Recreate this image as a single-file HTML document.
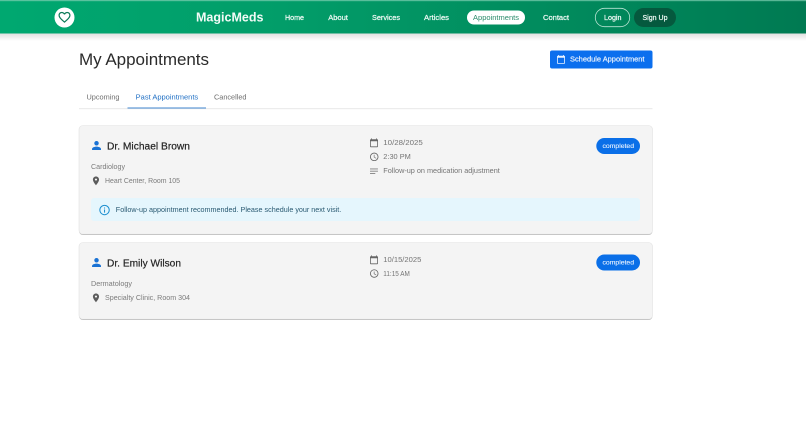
<!DOCTYPE html>
<html lang="en">
<head>
<meta charset="utf-8">
<title>My Appointments</title>
<style>
html,body{margin:0;padding:0;background:#fff;width:806px;height:423px;overflow:hidden}
svg{display:block;position:absolute;left:0;top:0;filter:blur(.35px)}
text{font-family:"Liberation Sans",sans-serif}
.nav{font-size:7.5px;fill:#f2fbf7;stroke:#f2fbf7;stroke-width:.22px}
.sub{font-size:7.2px;fill:#7b7b7b}
.dark{font-size:7.2px;fill:#747474}
.name{font-size:10px;fill:#222;stroke:#222;stroke-width:.18px}
.tab{font-size:7.2px;fill:#6e6e6e}
.badge{font-size:6.8px;fill:#e8f2ff;stroke:#e8f2ff;stroke-width:.12px}
</style>
</head>
<body>
<svg width="806" height="423" viewBox="0 0 806 423" xmlns="http://www.w3.org/2000/svg">
<defs>
<linearGradient id="hd" x1="0" y1="0" x2="1" y2="0">
<stop offset="0" stop-color="#00a870"/>
<stop offset=".35" stop-color="#029d69"/>
<stop offset="1" stop-color="#007a52"/>
</linearGradient>
<linearGradient id="sh" x1="0" y1="0" x2="0" y2="1">
<stop offset="0" stop-color="#000" stop-opacity=".13"/>
<stop offset="1" stop-color="#000" stop-opacity="0"/>
</linearGradient>
<path id="cal" d="M20 3h-1V1h-2v2H7V1H5v2H4c-1.1 0-2 .9-2 2v16c0 1.1.9 2 2 2h16c1.1 0 2-.9 2-2V5c0-1.1-.9-2-2-2zm0 18H4V8h16v13z"/>
<path id="clock" d="M11.99 2C6.47 2 2 6.48 2 12s4.47 10 9.99 10C17.52 22 22 17.52 22 12S17.52 2 11.99 2zM12 20c-4.42 0-8-3.58-8-8s3.58-8 8-8 8 3.58 8 8-3.58 8-8 8zM12.5 7H11v6l5.25 3.15.75-1.23-4.5-2.67z"/>
<path id="pin" d="M12 2C8.13 2 5 5.13 5 9c0 5.25 7 13 7 13s7-7.75 7-13c0-3.87-3.13-7-7-7zm0 9.5c-1.38 0-2.5-1.12-2.5-2.5s1.12-2.5 2.5-2.5 2.5 1.12 2.5 2.5-1.12 2.5-2.5 2.5z"/>
<path id="person" d="M12 12c2.21 0 4-1.79 4-4s-1.79-4-4-4-4 1.79-4 4 1.79 4 4 4zm0 2c-2.67 0-8 1.34-8 4v2h16v-2c0-2.66-5.33-4-8-4z"/>
</defs>

<rect x="0" y="33" width="806" height="8" fill="url(#sh)"/>
<rect x="0" y="0" width="806" height="33.5" fill="url(#hd)"/>
<rect x="0" y="0" width="806" height="1.2" fill="#7fcfb2" opacity=".7"/>

<circle cx="64.5" cy="17.5" r="10" fill="#fff"/>
<g transform="translate(57.3 10.1) scale(.6)" fill="#0a7a57">
<path d="M16.5 3c-1.74 0-3.41.81-4.5 2.09C10.91 3.81 9.24 3 7.5 3 4.42 3 2 5.42 2 8.5c0 3.78 3.4 6.86 8.55 11.54L12 21.35l1.45-1.32C18.6 15.36 22 12.28 22 8.5 22 5.42 19.58 3 16.5 3zm-4.4 15.55l-.1.1-.1-.1C7.14 14.24 4 11.39 4 8.5 4 6.5 5.5 5 7.5 5c1.54 0 3.04.99 3.57 2.36h1.87C13.46 5.99 14.96 5 16.5 5c2 0 3.5 1.5 3.5 3.5 0 2.89-3.14 5.74-7.9 10.05z"/>
</g>

<text x="196" y="21.5" font-size="12.6" font-weight="700" fill="#f2fbf7" textLength="67.5" lengthAdjust="spacingAndGlyphs">MagicMeds</text>
<text class="nav" x="285" y="20" textLength="19" lengthAdjust="spacingAndGlyphs">Home</text>
<text class="nav" x="328.3" y="20" textLength="19.6" lengthAdjust="spacingAndGlyphs">About</text>
<text class="nav" x="372" y="20" textLength="28" lengthAdjust="spacingAndGlyphs">Services</text>
<text class="nav" x="424" y="20" textLength="25" lengthAdjust="spacingAndGlyphs">Articles</text>
<rect x="467" y="10.5" width="58" height="14" rx="7" fill="#fff"/>
<text x="473" y="20" font-size="7.5" fill="#2a8b6b" textLength="46" lengthAdjust="spacingAndGlyphs">Appointments</text>
<text class="nav" x="543" y="20" textLength="26" lengthAdjust="spacingAndGlyphs">Contact</text>
<rect x="595.3" y="8.3" width="34.4" height="18.4" rx="9.2" fill="none" stroke="#b9e3d3" stroke-width=".8"/>
<text class="nav" x="604" y="20" textLength="17.5" lengthAdjust="spacingAndGlyphs">Login</text>
<rect x="634" y="8" width="42" height="19" rx="9.5" fill="#05593e"/>
<text class="nav" x="642.5" y="20" textLength="25" lengthAdjust="spacingAndGlyphs">Sign Up</text>

<text x="79" y="65" font-size="17" fill="#2b2b2b" textLength="130" lengthAdjust="spacing">My Appointments</text>

<rect x="550" y="50.5" width="102.5" height="18" rx="2" fill="#0b6fee"/>
<use href="#cal" transform="translate(556.2 54.6) scale(.4)" fill="#e8f2ff"/>
<text x="570" y="61.3" font-size="7.3" fill="#e8f2ff" stroke="#e8f2ff" stroke-width=".2" textLength="74.5" lengthAdjust="spacingAndGlyphs">Schedule Appointment</text>

<rect x="79" y="108" width="573.5" height="1.2" fill="#ececec"/>
<text class="tab" x="86.5" y="99.5" textLength="33" lengthAdjust="spacingAndGlyphs">Upcoming</text>
<text x="135.7" y="99.5" font-size="7.2" fill="#1f6fc4" textLength="62.5" lengthAdjust="spacingAndGlyphs">Past Appointments</text>
<text class="tab" x="214" y="99.5" textLength="32.5" lengthAdjust="spacingAndGlyphs">Cancelled</text>
<rect x="127.5" y="107.5" width="78.5" height="1" fill="#3f86cf"/>

<!-- Card 1 -->
<rect x="79" y="127" width="573.5" height="108" rx="4" fill="#000" opacity=".33"/>
<rect x="79" y="125.5" width="573.5" height="108.7" rx="4" fill="#f4f4f4" stroke="#e2e2e2" stroke-width=".6"/>
<use href="#person" transform="translate(89.8 138.8) scale(.56)" fill="#1a72d4"/>
<text class="name" x="107" y="149.7" textLength="83" lengthAdjust="spacingAndGlyphs">Dr. Michael Brown</text>
<text class="sub" x="91" y="169" textLength="34" lengthAdjust="spacingAndGlyphs">Cardiology</text>
<use href="#pin" transform="translate(90.7 175.6) scale(.44)" fill="#5c5c5c"/>
<text class="sub" x="105" y="183" textLength="75" lengthAdjust="spacingAndGlyphs">Heart Center, Room 105</text>
<use href="#cal" transform="translate(369.2 138) scale(.4)" fill="#666"/>
<text class="dark" x="383.3" y="145" textLength="39.5" lengthAdjust="spacingAndGlyphs">10/28/2025</text>
<use href="#clock" transform="translate(369.2 151.8) scale(.42)" fill="#666"/>
<text class="dark" x="383.3" y="159" textLength="27.5" lengthAdjust="spacingAndGlyphs">2:30 PM</text>
<path d="M3 18h12v-2H3v2zM3 6v2h18V6H3zm0 7h18v-2H3v2z" transform="translate(368.7 165.9) scale(.44)" fill="#808080"/>
<text class="dark" x="383.3" y="173" textLength="116.5" lengthAdjust="spacingAndGlyphs">Follow-up on medication adjustment</text>
<rect x="596.3" y="138" width="43.7" height="16" rx="8" fill="#0a6fe8"/>
<text class="badge" x="602.5" y="148.2" textLength="31.5" lengthAdjust="spacingAndGlyphs">completed</text>
<rect x="91" y="198" width="549" height="23" rx="3" fill="#e5f6fd"/>
<path d="M11 7h2v2h-2zm0 4h2v6h-2zm1-9C6.48 2 2 6.48 2 12s4.48 10 10 10 10-4.48 10-10S17.52 2 12 2zm0 18c-4.41 0-8-3.59-8-8s3.59-8 8-8 8 3.59 8 8-3.59 8-8 8z" transform="translate(98.3 203.8) scale(.52)" fill="#1c8ecf"/>
<text x="115.8" y="212" font-size="7.4" fill="#2a5a72" textLength="225.5" lengthAdjust="spacingAndGlyphs">Follow-up appointment recommended. Please schedule your next visit.</text>

<!-- Card 2 -->
<rect x="79" y="244" width="573.5" height="76" rx="4" fill="#000" opacity=".33"/>
<rect x="79" y="242.5" width="573.5" height="76.7" rx="4" fill="#f4f4f4" stroke="#e2e2e2" stroke-width=".6"/>
<use href="#person" transform="translate(89.8 255.8) scale(.56)" fill="#1a72d4"/>
<text class="name" x="107" y="266.5" textLength="74" lengthAdjust="spacingAndGlyphs">Dr. Emily Wilson</text>
<text class="sub" x="91" y="286" textLength="41" lengthAdjust="spacingAndGlyphs">Dermatology</text>
<use href="#pin" transform="translate(90.7 292.6) scale(.44)" fill="#5c5c5c"/>
<text class="sub" x="105" y="300" textLength="85" lengthAdjust="spacingAndGlyphs">Specialty Clinic, Room 304</text>
<use href="#cal" transform="translate(369.2 255) scale(.4)" fill="#666"/>
<text class="dark" x="383.3" y="262" textLength="38" lengthAdjust="spacingAndGlyphs">10/15/2025</text>
<use href="#clock" transform="translate(369.2 268.5) scale(.42)" fill="#666"/>
<text class="dark" x="383.3" y="276" textLength="26.5" lengthAdjust="spacingAndGlyphs">11:15 AM</text>
<rect x="596.3" y="254.5" width="43.7" height="16" rx="8" fill="#0a6fe8"/>
<text class="badge" x="602.5" y="264.7" textLength="31.5" lengthAdjust="spacingAndGlyphs">completed</text>
</svg>
</body>
</html>
